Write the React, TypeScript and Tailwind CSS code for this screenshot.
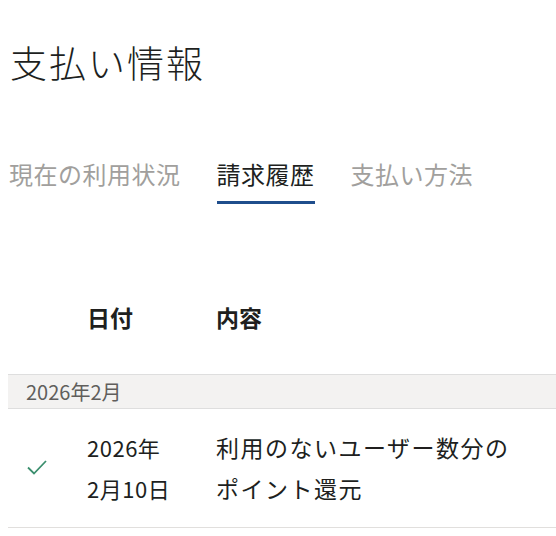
export default function App() {
  return (
    <div
      className="w-[556px] h-[536px] overflow-hidden bg-white pl-[8px] text-[#201f1e]"
      style={{ fontFamily: '"Noto Sans CJK JP", "Noto Sans", sans-serif' }}
    >
      <h1 className="pt-[36px] pl-[2px] text-[37px] leading-[52px] tracking-[2px] font-light">
        支払い情報
      </h1>

      <div className="mt-[69px] flex gap-[36px] pl-[1px] text-[24px] leading-[34px] tracking-[0.5px]">
        <div className="pb-[10px] text-[#a19f9d]">現在の利用状況</div>
        <div className="pb-[10px] border-b-[3px] border-[#1f4e8c]">請求履歴</div>
        <div className="pb-[10px] text-[#a19f9d]">支払い方法</div>
      </div>

      <div className="mt-[96px] grid grid-cols-[79px_129px_1fr] text-[23px] leading-[34px] font-bold">
        <div />
        <div>日付</div>
        <div>内容</div>
      </div>

      <div className="mt-[40px] h-[35px] flex items-center border-y border-[#dedede] bg-[#f3f2f1] pl-[18px] text-[20px] text-[#605e5c]">
        2026年2月
      </div>

      <div className="grid grid-cols-[79px_129px_1fr] items-center border-b border-[#e1dfdd] py-[18px] text-[22px] leading-[41px]">
        <div className="flex pl-[18px] -mt-[3px]">
          <svg width="22" height="18" viewBox="0 0 22 18" fill="none">
            <path d="M2 9.5 L8 15.5 L20 3" stroke="#3b8f6e" strokeWidth="1.8" />
          </svg>
        </div>
        <div className="tracking-[0.5px]">
          2026年
          <br />
          2月10日
        </div>
        <div className="text-[23px] tracking-[1.5px]">
          利用のないユーザー数分の
          <br />
          ポイント還元
        </div>
      </div>
    </div>
  );
}
